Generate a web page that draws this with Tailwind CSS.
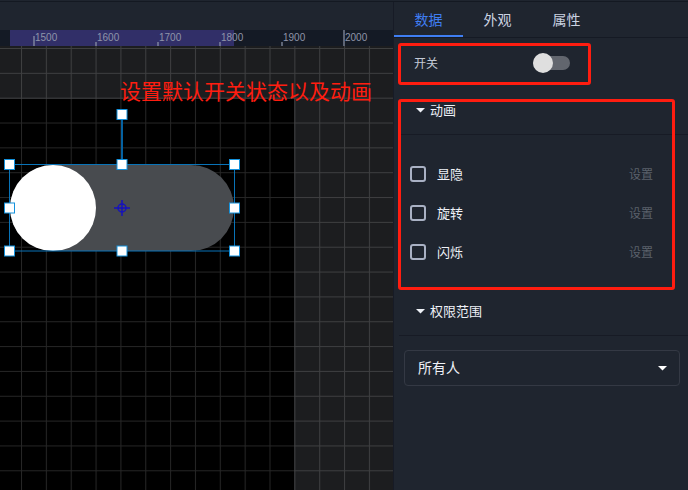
<!DOCTYPE html>
<html lang="zh-CN">
<head>
<meta charset="utf-8">
<meta name="viewport" content="width=device-width, initial-scale=1">
<title>开关</title>
<script src="https://cdn.jsdelivr.net/npm/@tailwindcss/browser@4"></script>
</head>
<body class="bg-[#1f252f] font-['Noto_Sans_CJK_SC',sans-serif] text-[#eef1f7]">
<div class="relative flex h-screen flex-col overflow-hidden">
  <div class="h-[2px] shrink-0 border-b border-[#141922]"></div>
  <div class="flex min-h-0 flex-1">

    <main class="flex min-w-0 flex-1 flex-col">
      <div class="h-7 shrink-0"></div>
      <!-- Ruler -->
      <div class="relative h-4 shrink-0 overflow-hidden bg-[#141a25]">
        <svg class="absolute inset-0 h-4 w-full font-['Liberation_Sans_Narrow','Liberation_Sans',sans-serif] text-[10px]" aria-label="标尺">
          <rect x="10" y="0" width="224" height="16" fill="#312f68"/>
          <g fill="#9097ac" fill-opacity=".6">
            <rect x="33" y="6" width="2" height="10"/><rect x="95" y="12" width="2" height="4"/>
            <rect x="157" y="12" width="2" height="4"/><rect x="219" y="12" width="2" height="4"/>
            <rect x="281" y="12" width="2" height="4"/><rect x="343" y="0" width="2" height="16"/>
          </g>
          <g fill="#8f94a8">
            <text x="35" y="11">1500</text><text x="97" y="11">1600</text><text x="159" y="11">1700</text>
            <text x="221" y="11">1800</text><text x="283" y="11">1900</text><text x="345" y="11">2000</text>
          </g>
        </svg>
      </div>
      <!-- Canvas -->
      <div class="relative min-h-0 flex-1 overflow-hidden bg-[#1c1d1f]">
        <svg class="absolute inset-0 h-full w-full" aria-label="画布">
          <defs>
            <pattern id="grid" x="21" y="2" width="24.85" height="24.84" patternUnits="userSpaceOnUse">
              <path d="M.5 0V24.84M0 .5H24.85" stroke="#fff" stroke-opacity=".15" fill="none"/>
            </pattern>
          </defs>
          <rect x="0" y="53" width="294" height="100%" fill="#000"/>
          <rect width="100%" height="100%" fill="url(#grid)"/>
          <rect x="10" y="119" width="224" height="86" rx="43" fill="#484b4f"/>
          <circle cx="53" cy="162" r="43" fill="#fff"/>
          <path d="M122 69V119" stroke="#0561a0" stroke-width="2"/>
          <rect x="9.500" y="118.500" width="225" height="86.500" fill="none" stroke="#0873b8"/>
          <g fill="none" stroke="#1612bd">
            <circle cx="122" cy="162" r="4" stroke-width="1.500"/>
            <path d="M122 154V170M114 162H130" stroke-width="1.500"/>
          </g>
          <g fill="#fff" stroke="#1592dc">
            <rect x="117" y="63.500" width="10" height="10"/>
            <rect x="4.500" y="113.500" width="10" height="10"/><rect x="117" y="113.500" width="10" height="10"/><rect x="229.500" y="113.500" width="10" height="10"/>
            <rect x="4.500" y="157" width="10" height="10"/><rect x="229.500" y="157" width="10" height="10"/>
            <rect x="4.500" y="200" width="10" height="10"/><rect x="117" y="200" width="10" height="10"/><rect x="229.500" y="200" width="10" height="10"/>
          </g>
        </svg>
        <p class="absolute top-8 left-[120px] text-[21px] leading-6 whitespace-nowrap text-[#ff1d10]">设置默认开关状态以及动画</p>
      </div>
    </main>

    <aside class="w-[295px] shrink-0 border-l border-[#171b26]">
      <nav class="flex h-9 border-b border-[#151a24] text-sm text-[#cbd3e2]">
        <button class="w-[69px] border-b-2 border-[#3f7ef3] text-[#3f7ef3]">数据</button>
        <button class="w-[69px] border-b-2 border-transparent">外观</button>
        <button class="w-[69px] border-b-2 border-transparent">属性</button>
      </nav>

      <div class="flex h-[50px] items-center px-5 text-xs">
        <label for="power" class="w-[119px] text-[#c3c9d5]">开关</label>
        <span class="relative flex h-5 w-[37px] items-center">
          <input id="power" type="checkbox" role="switch" class="peer h-[14px] w-[37px] appearance-none rounded-full bg-[#62666e]">
          <span class="pointer-events-none absolute left-0 size-5 rounded-full bg-[#dfdfdf] peer-checked:left-[17px]"></span>
        </span>
      </div>

      <section>
        <h2 class="ml-[5px] border-b border-[#171b25] text-[13px]">
          <button class="flex h-[46px] w-full items-center gap-1 pb-0.5 pl-4">
            <svg class="h-[5px] w-[11px]" viewBox="0 0 11 5" fill="currentColor"><path d="M1 0h9L5.500 4.500z"/></svg>动画
          </button>
        </h2>
        <div class="pt-[19px] pb-[18px] pl-4 text-[13px]">
          <div class="flex h-[39px] items-center gap-[11px] pr-[35px]">
            <input id="a1" type="checkbox" class="size-4 appearance-none rounded-[3px] border-2 border-[#a9b1c4] checked:bg-[#3f7ef3]"><label for="a1">显隐</label><button class="ml-auto text-xs text-[#5b616b]">设置</button>
          </div>
          <div class="flex h-[39px] items-center gap-[11px] pr-[35px]">
            <input id="a2" type="checkbox" class="size-4 appearance-none rounded-[3px] border-2 border-[#a9b1c4] checked:bg-[#3f7ef3]"><label for="a2">旋转</label><button class="ml-auto text-xs text-[#5b616b]">设置</button>
          </div>
          <div class="flex h-[39px] items-center gap-[11px] pr-[35px]">
            <input id="a3" type="checkbox" class="size-4 appearance-none rounded-[3px] border-2 border-[#a9b1c4] checked:bg-[#3f7ef3]"><label for="a3">闪烁</label><button class="ml-auto text-xs text-[#5b616b]">设置</button>
          </div>
        </div>
      </section>

      <section>
        <h2 class="ml-[5px] border-b border-[#171b25] text-[13px]">
          <button class="flex h-[46px] w-full items-center gap-1 pb-0.5 pl-4">
            <svg class="h-[5px] w-[11px]" viewBox="0 0 11 5" fill="currentColor"><path d="M1 0h9L5.500 4.500z"/></svg>权限范围
          </button>
        </h2>
        <div class="pt-[14px] pr-2 pl-[10px]">
          <div class="relative">
            <select aria-label="权限范围" class="block h-9 w-full appearance-none rounded border border-[#343944] bg-transparent px-[13px] pb-0.5 text-sm">
              <option>所有人</option>
            </select>
            <svg class="pointer-events-none absolute top-4 right-3 h-[5px] w-[11px]" viewBox="0 0 11 5" fill="#fff"><path d="M1 0h9L5.500 4.500z"/></svg>
          </div>
        </div>
      </section>
    </aside>
  </div>

  <!-- Callout frames -->
  <div class="pointer-events-none absolute top-[43px] right-[97px] h-[42px] w-[193px] rounded-[3px] border-3 border-[#ff1d10]"></div>
  <div class="pointer-events-none absolute top-[99px] right-[13px] h-[191px] w-[277px] rounded-[3px] border-3 border-[#ff1d10]"></div>
</div>
</body>
</html>
